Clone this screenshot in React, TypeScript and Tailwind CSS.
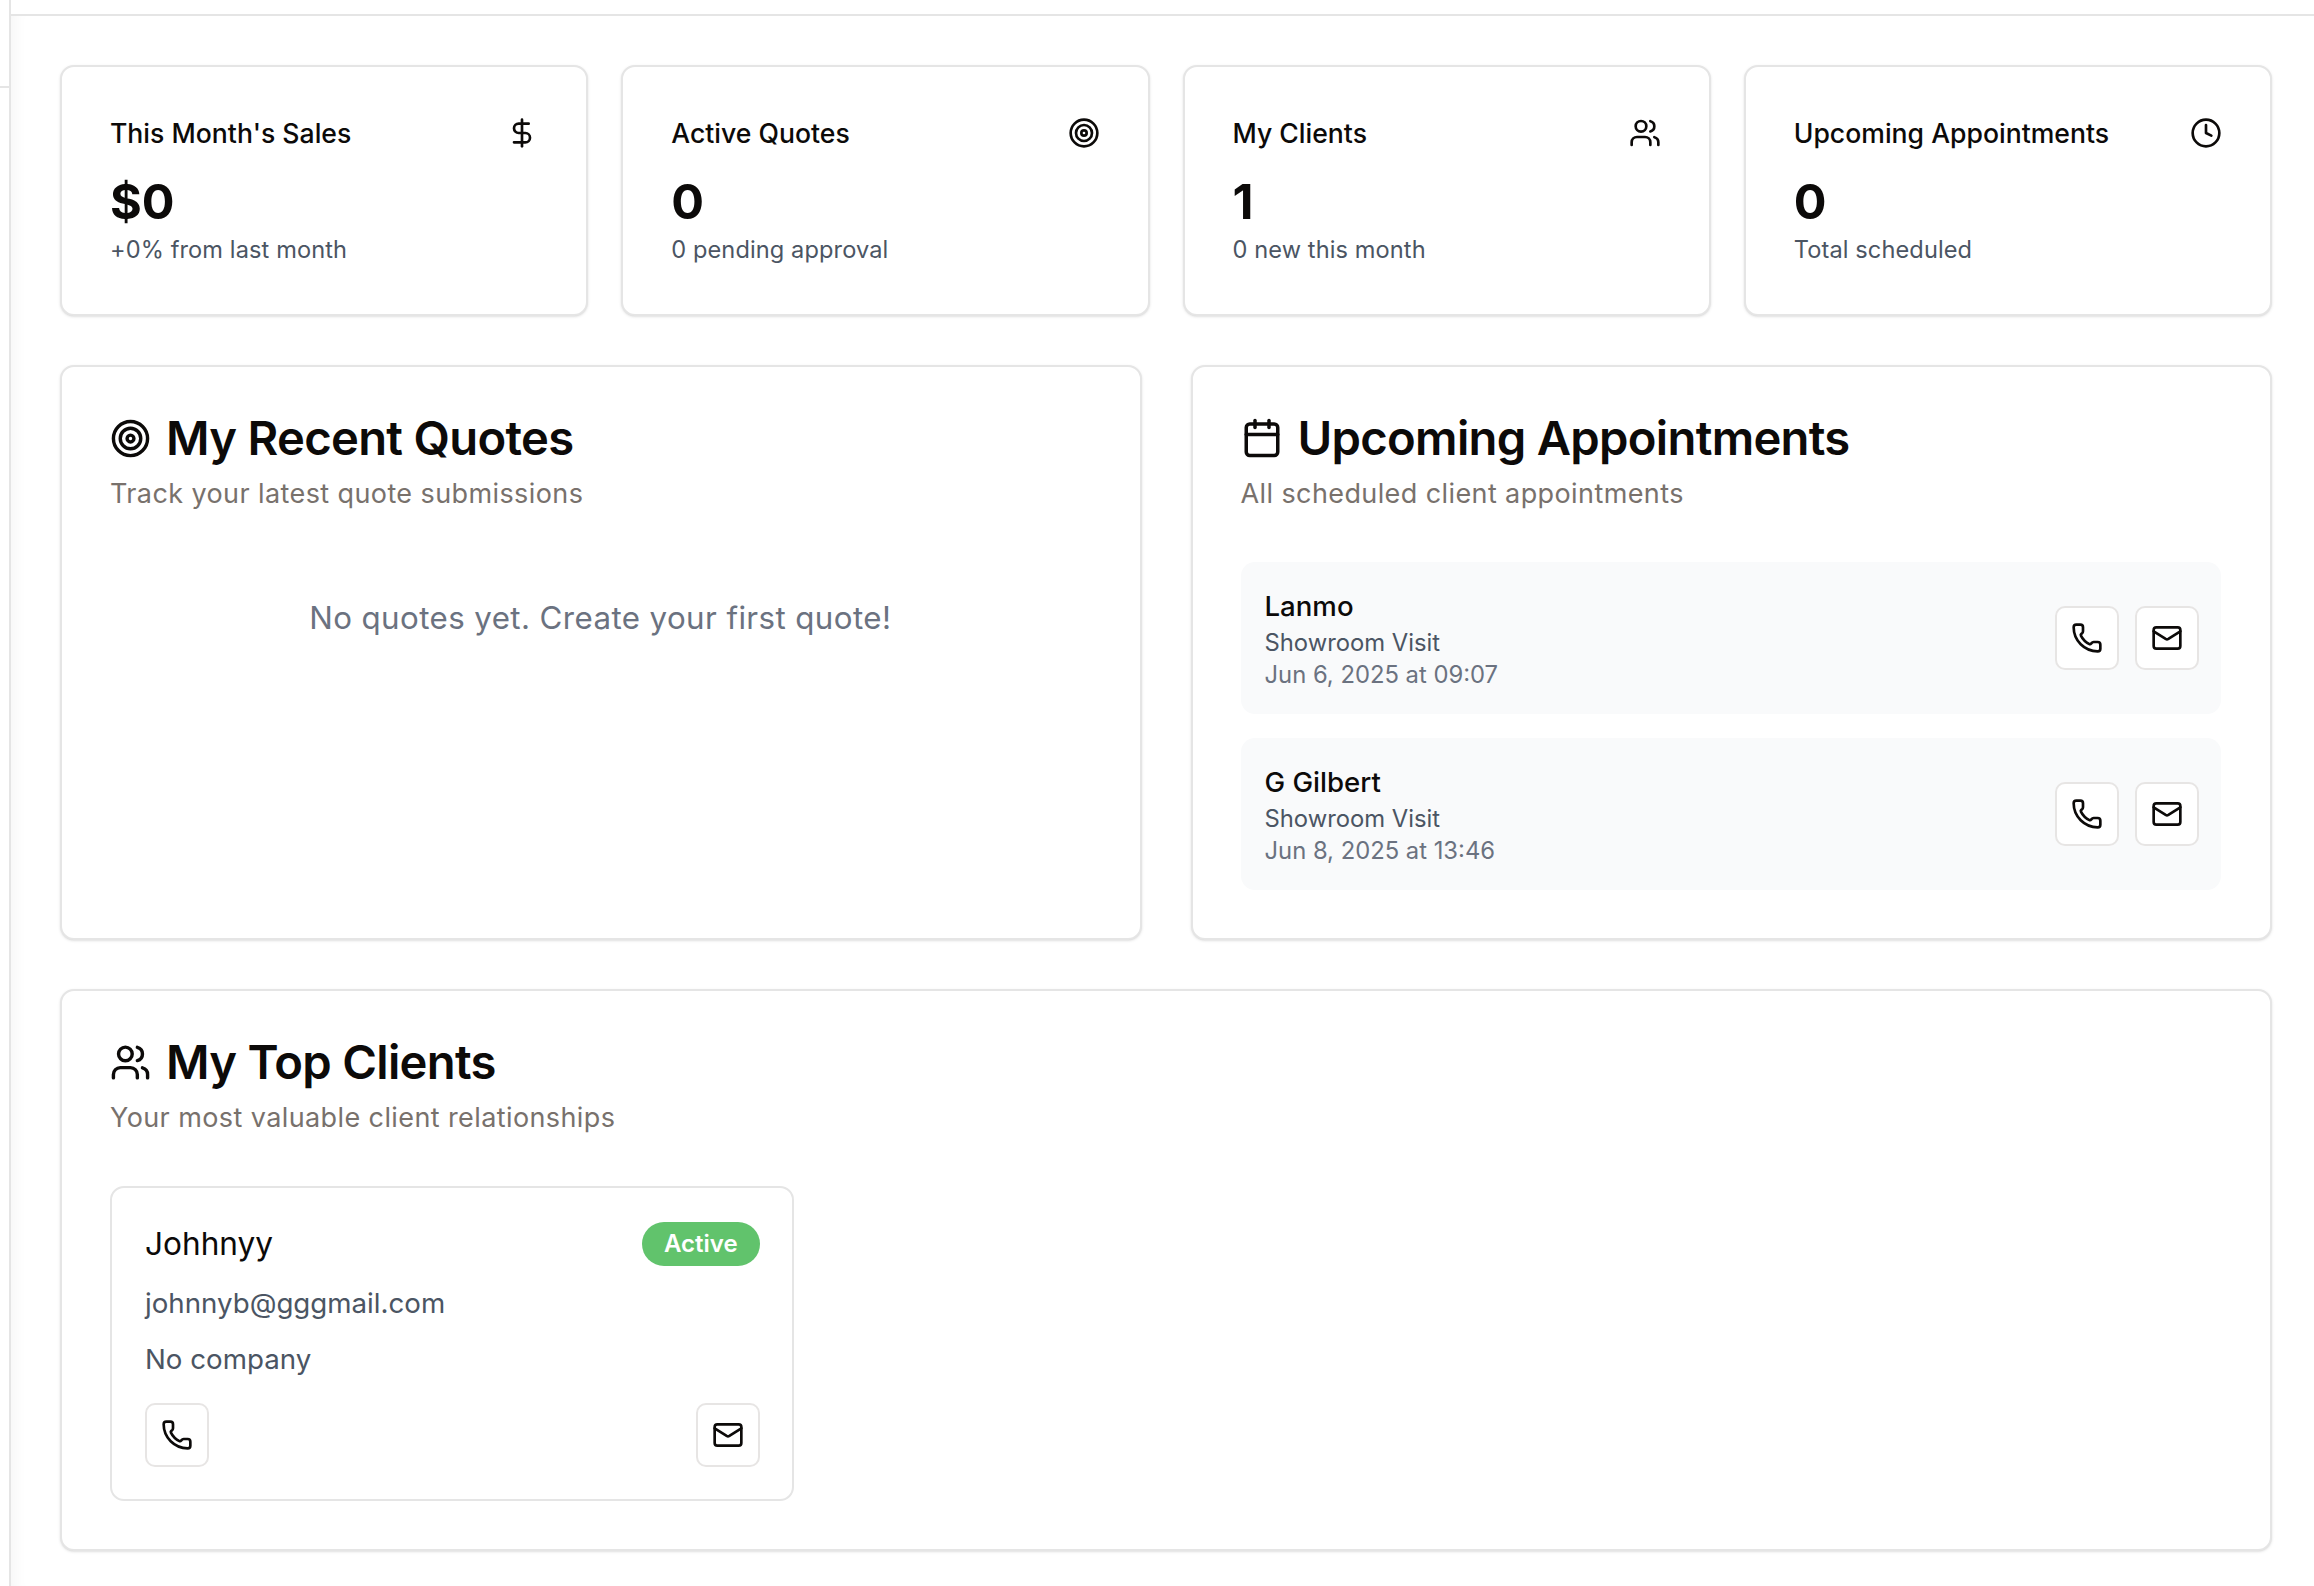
import { DollarSign, Target, Users, Clock, Calendar, Phone, Mail } from "lucide-react";
import type { ReactNode } from "react";

const stats = [
  { title: "This Month's Sales", value: "$0", sub: "+0% from last month", Icon: DollarSign },
  { title: "Active Quotes", value: "0", sub: "0 pending approval", Icon: Target },
  { title: "My Clients", value: "1", sub: "0 new this month", Icon: Users },
  { title: "Upcoming Appointments", value: "0", sub: "Total scheduled", Icon: Clock },
];

const appts = [
  { name: "Lanmo", kind: "Showroom Visit", when: "Jun 6, 2025 at 09:07" },
  { name: "G Gilbert", kind: "Showroom Visit", when: "Jun 8, 2025 at 13:46" },
];

function IconBtn({ children }: { children: ReactNode }) {
  return (
    <button className="w-[64px] h-[64px] flex items-center justify-center rounded-[10px] border-2 border-[#e7e5e4] bg-white text-[#0c0a09]">
      {children}
    </button>
  );
}

function Section({ icon, title, desc, pb, children }: { icon: ReactNode; title: string; desc: string; pb: string; children: ReactNode }) {
  return (
    <section className={`rounded-[14px] border-2 border-[#e5e5e5] bg-white shadow-sm pl-[48px] pr-[49px] pt-[49px] ${pb}`}>
      <div className="flex items-center gap-[15px] h-[44px]">
        {icon}
        <h2 className="text-[47.2px] leading-[44px] font-semibold tracking-[-0.7px] text-[#0c0a09]">{title}</h2>
      </div>
      <p className="mt-[19px] text-[27px] leading-[30px] tracking-[0.4px] text-[#78716c]">{desc}</p>
      {children}
    </section>
  );
}

export default function App() {
  return (
    <div className="flex min-h-[1586px] bg-white font-['Inter',sans-serif]">
      <aside className="w-[11px] shrink-0 border-r-2 border-[#e5e5e5]">
        <div className="h-[88px] border-b-2 border-[#e5e5e5]" />
      </aside>
      <div className="flex-1 min-w-0 flex flex-col">
        <div className="h-[16px] border-b-2 border-[#e5e5e5]" />
        <main className="flex-1 pl-[49px] pr-[42px] pt-[49px] flex flex-col gap-[49px] shadow-[inset_14px_0_14px_-10px_rgba(0,0,0,0.04)]">
          <div className="grid grid-cols-4 gap-[33px]">
            {stats.map(({ title, value, sub, Icon }) => (
              <div key={title} className="h-[251px] rounded-[14px] border-2 border-[#e5e5e5] bg-white shadow-sm pl-[48px] pr-[48px] pt-[51px]">
                <div className="flex items-center justify-between h-[30px]">
                  <span className="text-[26.6px] font-medium leading-[30px] text-[#0c0a09]">{title}</span>
                  <Icon size={32} strokeWidth={2} className="text-[#0c0a09]" />
                </div>
                <div className="mt-[32px] text-[48.6px] font-bold leading-[44px] text-[#0c0a09]">{value}</div>
                <div className="mt-[13px] text-[23.6px] leading-[26px] tracking-[0.1px] text-[#4b5563]">{sub}</div>
              </div>
            ))}
          </div>
          <div className="grid grid-cols-2 gap-[49px]">
            <Section pb="pb-[48px]" icon={<Target size={41} strokeWidth={2} className="text-[#0c0a09]" />} title="My Recent Quotes" desc="Track your latest quote submissions">
              <p className="mt-[91px] text-center text-[31.3px] leading-[36px] text-[#6b7280] tracking-[0.4px]">No quotes yet. Create your first quote!</p>
            </Section>
            <Section pb="pb-[48px]" icon={<Calendar size={42} strokeWidth={2} className="text-[#0c0a09]" />} title="Upcoming Appointments" desc="All scheduled client appointments">
              <div className="mt-[53px] flex flex-col gap-[24px]">
                {appts.map((a) => (
                  <div key={a.name} className="h-[152px] rounded-[14px] bg-[#f9fafb] pl-[24px] pr-[22px] flex items-center justify-between">
                    <div className="pt-[3px]">
                      <div className="text-[27.6px] leading-[36px] font-medium text-[#0c0a09]">{a.name}</div>
                      <div className="mt-[3px] text-[23.8px] leading-[32px] text-[#4b5563]">{a.kind}</div>
                      <div className="text-[23.8px] leading-[32px] text-[#6b7280]">{a.when}</div>
                    </div>
                    <div className="flex gap-[16px]">
                      <IconBtn><Phone size={32} strokeWidth={2} /></IconBtn>
                      <IconBtn><Mail size={32} strokeWidth={2} /></IconBtn>
                    </div>
                  </div>
                ))}
              </div>
            </Section>
          </div>
          <Section pb="pb-[48px]" icon={<Users size={41} strokeWidth={2} className="text-[#0c0a09]" />} title="My Top Clients" desc="Your most valuable client relationships">
            <div className="mt-[53px] grid grid-cols-3 gap-[30px]">
              <div className="h-[315px] rounded-[14px] border-2 border-[#e5e5e5] bg-white pl-[33px] pr-[32px] pt-[34px] flex flex-col">
                <div className="flex items-center justify-between h-[44px]">
                  <span className="text-[31.6px] font-normal text-[#0c0a09]">Johhnyy</span>
                  <span className="h-[44px] px-[22px] rounded-full bg-[#61c36c] text-white text-[24px] font-semibold flex items-center">Active</span>
                </div>
                <div className="mt-[19px] text-[27.7px] leading-[36px] text-[#4b5563]">johnnyb@gggmail.com</div>
                <div className="mt-[20px] text-[27.7px] leading-[36px] text-[#4b5563]">No company</div>
                <div className="mt-[26px] flex justify-between">
                  <IconBtn><Phone size={32} strokeWidth={2} /></IconBtn>
                  <IconBtn><Mail size={32} strokeWidth={2} /></IconBtn>
                </div>
              </div>
            </div>
          </Section>
        </main>
      </div>
    </div>
  );
}
